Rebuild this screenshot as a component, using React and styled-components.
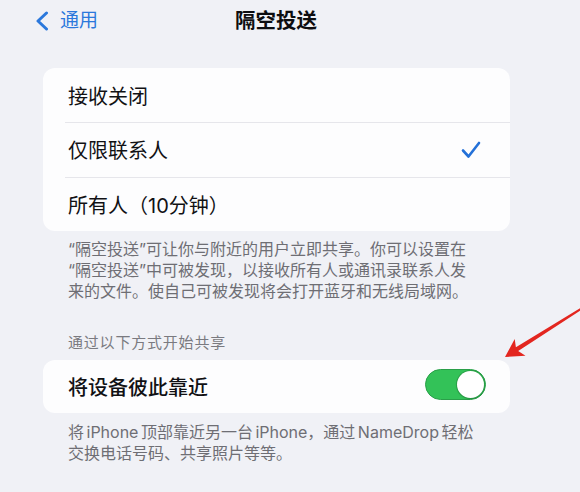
import React from "react";
import styled, { createGlobalStyle } from "styled-components";

const Global = createGlobalStyle`
  html, body { margin: 0; padding: 0; background: #f0f1f6; }
  body { font-family: "Inter", "Noto Sans CJK SC", sans-serif; -webkit-font-smoothing: antialiased; }
`;

const Screen = styled.div`
  position: relative;
  width: 580px;
  height: 492px;
  overflow: hidden;
  background: #f0f1f6;
  color: #111114;
`;

const Nav = styled.div`
  height: 42px;
  display: flex;
  align-items: center;
  padding-left: 35px;
`;

const Back = styled.div`
  display: flex;
  align-items: center;
  gap: 11px;
  color: #2b78dc;
  font-size: 19px;
  line-height: 24px;
`;

const Title = styled.div`
  margin-left: 137px;
  font-size: 20.5px;
  font-weight: 700;
  line-height: 24px;
  color: #0d0d10;
`;

const Content = styled.div`
  padding: 26px 70px 0 43px;
`;

const Card = styled.div`
  background: #fdfdfe;
  border-radius: 12px;
  overflow: hidden;
`;

const Row = styled.div`
  position: relative;
  height: ${(p) => p.$h || 54}px;
  display: flex;
  align-items: center;
  justify-content: space-between;
  padding: 0 ${(p) => p.$pr || 29}px 0 25px;
  font-size: 20px;
  font-weight: ${(p) => p.$weight || 400};
  color: #111114;
  &::before {
    content: "";
    display: ${(p) => (p.$sep ? "block" : "none")};
    position: absolute;
    top: 0;
    left: 22px;
    right: 0;
    height: 1px;
    background: #e6e6eb;
  }
`;

const Footer = styled.div`
  padding: ${(p) => p.$pt || 8}px 25px 0 25px;
  font-size: 16px;
  line-height: 21px;
  word-spacing: ${(p) => p.$ws || 0}px;
  color: #6e6e74;
`;

const SectionHeader = styled.div`
  margin: 31px 0 7px 0;
  padding-left: 25px;
  font-size: 15px;
  letter-spacing: 0.8px;
  line-height: 20px;
  color: #7a7a80;
`;

const Toggle = styled.div`
  position: relative;
  width: 61px;
  height: 31px;
  box-sizing: border-box;
  border-radius: 16px;
  background: #33c258;
  border: 1.5px solid #2a9f49;
  margin-top: -4px;
`;

const Knob = styled.div`
  position: absolute;
  right: 1px;
  top: 0.5px;
  width: 27px;
  height: 27px;
  border-radius: 50%;
  background: #ffffff;
  box-shadow: 0 0 0 1px rgba(30, 120, 50, 0.4), 0 1px 2px rgba(0,0,0,0.15);
`;

const ArrowSvg = styled.svg`
  position: absolute;
  left: 495px;
  top: 300px;
`;

const Chevron = () => (
  <svg width="14" height="20" viewBox="0 0 14 20">
    <path d="M11.5 2 L3 10 L11.5 18" fill="none" stroke="#2b78dc" strokeWidth="3" strokeLinecap="round" strokeLinejoin="round" />
  </svg>
);

const Check = () => (
  <svg width="20" height="18" viewBox="0 0 20 18">
    <path d="M2 9.5 L7.5 15.5 L18 2" fill="none" stroke="#2471d8" strokeWidth="2.6" strokeLinecap="round" strokeLinejoin="round" />
  </svg>
);

export default function App() {
  return (
    <>
      <Global />
      <Screen>
        <Nav>
          <Back>
            <Chevron />
            <span>通用</span>
          </Back>
          <Title>隔空投送</Title>
        </Nav>
        <Content>
          <Card>
            <Row>接收关闭</Row>
            <Row $h={55} $sep>
              <span>仅限联系人</span>
              <Check />
            </Row>
            <Row $h={54} $sep>所有人（10分钟）</Row>
          </Card>
          <Footer>
            “隔空投送”可让你与附近的用户立即共享。你可以设置在
            <br />
            “隔空投送”中可被发现，以接收所有人或通讯录联系人发
            <br />
            来的文件。使自己可被发现将会打开蓝牙和无线局域网。
          </Footer>
          <SectionHeader>通过以下方式开始共享</SectionHeader>
          <Card>
            <Row $h={53} $pr={24} $weight={500}>
              <span>将设备彼此靠近</span>
              <Toggle>
                <Knob />
              </Toggle>
            </Row>
          </Card>
          <Footer $pt={9} $ws={-2}>
            将 iPhone 顶部靠近另一台 iPhone，通过 NameDrop 轻松
            <br />
            交换电话号码、共享照片等等。
          </Footer>
        </Content>
        <ArrowSvg width="90" height="70" viewBox="0 0 90 70">
          <path
            d="M10 57 L19.7 38.9 L20.9 47.2 L87.5 6.8 L88.5 8.6 L23.2 50.9 L30.5 55.7 Z"
            fill="#e3261f"
          />
        </ArrowSvg>
      </Screen>
    </>
  );
}
